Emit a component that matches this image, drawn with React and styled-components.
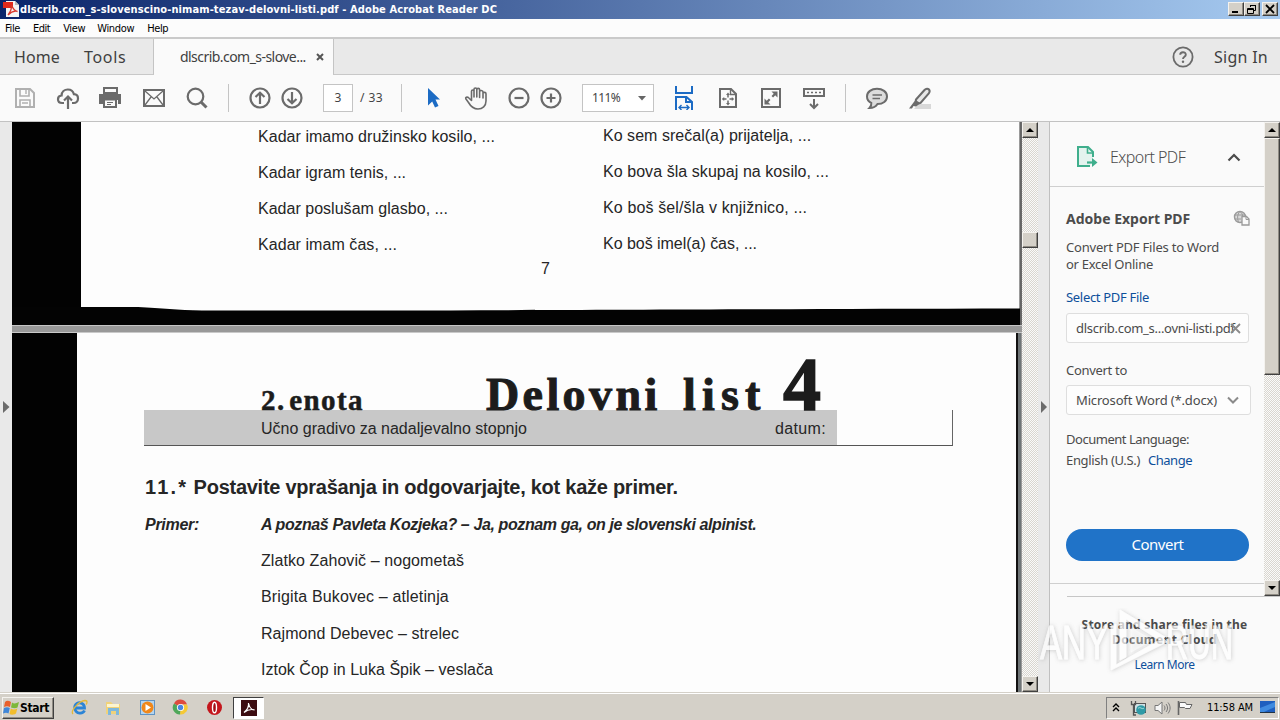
import React from 'react'
import styled, { createGlobalStyle, css } from 'styled-components';

const GlobalStyle = createGlobalStyle`
  * { box-sizing: border-box; }
  body { margin: 0; overflow: hidden; }
  svg { display: block; flex: none; }
`;

const UI = '"Noto Sans", sans-serif';
const TAHOMA = '"DejaVu Sans Condensed", "DejaVu Sans", sans-serif';
const DOC = '"Liberation Sans", sans-serif';

const kadar = [
  ['Kadar imamo družinsko kosilo, ...', 0.04],
  ['Kadar igram tenis, ...', 0.02],
  ['Kadar poslušam glasbo, ...', 0.02],
  ['Kadar imam čas, ...', 0.06],
];
const ko = [
  ['Ko sem srečal(a) prijatelja, ...', 0.03],
  ['Ko bova šla skupaj na kosilo, ...', 0.06],
  ['Ko boš šel/šla v knjižnico, ...', 0.13],
  ['Ko boš imel(a) čas, ...', -0.03],
];
const people = [
  ['Zlatko Zahovič – nogometaš', 0.08],
  ['Brigita Bukovec – atletinja', 0.14],
  ['Rajmond Debevec – strelec', 0.06],
  ['Iztok Čop in Luka Špik – veslača', 0.02],
];
const menu = [
  ['File', 5, -0.37],
  ['Edit', 13, -0.5],
  ['View', 13, -0.36],
  ['Window', 12, -0.33],
  ['Help', 13, -0.39],
];

const G = '#6b6b6b';

const SaveIcon = () => (
  <svg width="24" height="24" fill="none" stroke="#b0b0b0" strokeWidth="2">
    <path d="M3 3H17L21 7V21H3Z" />
    <path d="M7 3V10H16V3M7 21V14H17V21" strokeWidth="1.6" />
    <path d="M13 4V8M9 17H15" strokeWidth="1.4" />
  </svg>
);
const CloudIcon = () => (
  <svg width="24" height="24" fill="none" stroke={G} strokeWidth="2.200">
    <path d="M8 17H6.2C3.500 17 2 15.300 2 13.200C2 11 3.600 9.600 5.600 9.500C5.700 5.900 8.500 3.500 11.800 3.500C15 3.500 17.300 5.400 17.900 8.200C20.400 8.300 22 10.100 22 12.500C22 15.200 20.200 17 17.800 17H16" />
    <path d="M12 23V11M8 14.500L12 10.500L16 14.500" />
  </svg>
);
const PrintIcon = () => (
  <svg width="24" height="24">
    <path d="M6 2H19V7H6Z" fill="none" stroke={G} strokeWidth="2" />
    <path d="M1 8H23V18H20V14H5V18H1Z" fill={G} />
    <path d="M6 13.500H18V21H6Z" fill="#fafafa" stroke={G} strokeWidth="2" />
    <path d="M9 16.500H15M9 18.500H13" stroke={G} strokeWidth="1" />
  </svg>
);
const MailIcon = () => (
  <svg width="24" height="24" fill="none" stroke={G}>
    <rect x="2" y="4" width="20" height="16" strokeWidth="2" />
    <path d="M3 5L12 13L21 5M3 19L9 11M21 19L15 11" strokeWidth="1.3" />
  </svg>
);
const SearchIcon = () => (
  <svg width="24" height="24" fill="none" stroke={G}>
    <circle cx="10.500" cy="10.500" r="7.800" strokeWidth="2.200" />
    <path d="M16 16L21.500 21.500" strokeWidth="3" />
  </svg>
);
const RoundIcon = ({ d }) => (
  <svg width="24" height="24" fill="none" stroke={G} strokeWidth="2.200">
    <circle cx="12" cy="12" r="9.500" />
    <path d={d} />
  </svg>
);
const CursorIcon = () => (
  <svg width="24" height="24">
    <path d="M6 2L18 13.500H13.500L16.500 20L13 21.500L10.200 15.500L6 19.500Z" fill="#1c6bc4" />
  </svg>
);
const HandIcon = () => (
  <svg width="24" height="24" fill="none" stroke={G} strokeWidth="1.600" strokeLinecap="round" strokeLinejoin="round">
    <path d="M7.500 14.500V5.300C7.500 3.500 10 3.500 10 5.300V11M10 11V3.300C10 1.500 12.800 1.500 12.800 3.300V11M12.800 11V3.600C12.800 1.900 15.600 1.900 15.600 3.600V11.500M15.600 11.500V5.600C15.600 4 19 4 19 6V12M19 12V7.500C19 6 22 6 22 7.800V15C22 20 18.500 23 14 23C9 23 6.500 20 4.500 16.500L1.800 12.800C1.200 11.500 3 10.500 4.300 11.500L7.500 14.500" />
  </svg>
);
const FitWidthIcon = () => (
  <svg width="24" height="24" fill="none" stroke="#1c6bc4" strokeWidth="2">
    <path d="M4 -1V7H20V-1" />
    <path d="M4 24V11H14.500L20 16V24M14 11V16H20" />
    <path d="M7 21.500H17M9.500 19L7 21.500L9.500 24M14.500 19L17 21.500L14.500 24" strokeWidth="1.400" />
  </svg>
);
const FitPageIcon = () => (
  <svg width="24" height="24" fill="none" stroke={G} strokeWidth="2">
    <path d="M4 3H15L20 8V21H4Z" />
    <path d="M14.500 3V8.500H20" strokeWidth="1.400" />
    <path d="M12 8V18M7 13H17" strokeWidth="1.500" strokeDasharray="3.500 3" />
    <path d="M12 6.500L14 9H10ZM12 19.500L14 17H10ZM5.800 13L8.200 11V15ZM18.200 13L15.800 11V15Z" fill={G} stroke="none" />
  </svg>
);
const FullScreenIcon = () => (
  <svg width="24" height="24">
    <rect x="3" y="3" width="18" height="18" fill="none" stroke={G} strokeWidth="2" />
    <path d="M12.500 5.500H18.500V11.500ZM5.500 12.500V18.500H11.500Z" fill={G} />
    <path d="M13.300 10.700L16 8M10.700 13.300L8 16" stroke={G} strokeWidth="2.200" />
  </svg>
);
const KeysIcon = () => (
  <svg width="24" height="24" fill="none" stroke={G} strokeWidth="2">
    <rect x="2" y="3" width="20" height="7" />
    <path d="M5 6.500H20" strokeDasharray="2 2" strokeWidth="1.600" />
    <path d="M12 13V22M8 18L12 22L16 18" />
  </svg>
);
const CommentIcon = () => (
  <svg width="24" height="24">
    <path d="M12 2.700C17.500 2.700 22 6 22 10.500C22 15 18 18 12.500 18C11 20.500 8 22 4.500 22C6 20.500 6.500 18.800 6.300 17C3.600 15.700 2 13.300 2 10.500C2 6 6.500 2.700 12 2.700Z" fill="#dcdcdc" stroke={G} strokeWidth="2" />
    <path d="M7.500 9H17M7.500 12.500H15" stroke={G} strokeWidth="1.400" />
  </svg>
);
const PenIcon = () => (
  <svg width="24" height="24">
    <path d="M10 18H23V23H6Z" fill="#d8d8d8" />
    <path d="M8 13.500L16.500 4C18 2.500 20 2.500 21 3.500C22 4.700 21.800 6 20.800 7.300L12.500 17C11 18 7 15.500 8 13.500Z" fill="#e8e8e8" stroke={G} strokeWidth="2" />
    <path d="M7 14.500L11.500 18L8 20.500L5.500 20L4 22.500H1Z" fill={G} />
  </svg>
);

const Triangle = ({ dir }) => (
  <svg width="8" height="4">
    <path d={dir === 'up' ? 'M4 0L8 4H0Z' : 'M0 0H8L4 4Z'} fill="#000" />
  </svg>
);

const PdfFileIcon = () => (
  <svg width="16" height="16">
    <path d="M3 0H12L16 4V16H3Z" fill="#f4f4f4" />
    <path d="M0 1H10V7H0Z" fill="#e02a1c" />
    <path d="M12 0V4H16Z" fill="#bbb" />
    <path d="M5 14C8 10 9 8 8.500 4C10 8 12 10 14.500 10.500C11 9.500 8 11 5 14Z" fill="none" stroke="#d8382c" strokeWidth="1.300" />
  </svg>
);

const ExportIcon = () => (
  <svg width="22" height="24" fill="none" stroke="#3fae8c">
    <path d="M14 21H2V2H12L17 7V12" strokeWidth="2" fill="#e3f3ee" />
    <path d="M11.500 2V8H17" strokeWidth="1.600" />
    <path d="M11 17.500H19" strokeWidth="2.200" />
    <path d="M16 13L21.500 17.500L16 22Z" fill="#3fae8c" stroke="none" />
  </svg>
);

const GlobeIcon = () => (
  <svg width="18" height="18" fill="none" stroke="#9a9a9a">
    <circle cx="7" cy="7" r="5.500" strokeWidth="1.400" fill="#d9d9d9" />
    <path d="M1.500 5H12M1.500 9H8M7 1.500C4 4 4 10 6 12.500M7 1.500C9 3 9.500 4.500 9.500 6" strokeWidth="1" />
    <path d="M9 6.500H13.500L16 9V15H9Z" fill="#fafafa" strokeWidth="1.300" />
    <path d="M13 6.500V9.500H16" />
  </svg>
);

const Watermark = () => (
  <WatermarkSvg width="206" height="74" viewBox="0 0 206 74">
    <defs>
      <filter id="soft" x="-20%" y="-20%" width="140%" height="140%">
        <feDropShadow dx="0.500" dy="0.500" stdDeviation="2" floodColor="#777" floodOpacity="0.500" />
      </filter>
    </defs>
    <g filter="url(#soft)" fill="#fff" stroke="#fff" strokeWidth="0.800" opacity="0.720">
      <text x="5" y="51" fontFamily="Liberation Sans, sans-serif" fontSize="48" textLength="68" lengthAdjust="spacingAndGlyphs">ANY</text>
      <text x="131" y="51" fontFamily="Liberation Sans, sans-serif" fontSize="48" textLength="67" lengthAdjust="spacingAndGlyphs">RUN</text>
      <path d="M76 62V18L81 16V57L128 30L132 34Z" />
      <path d="M85 2L130 29L126 33L91 11V49L85 52Z" />
      <path d="M96 20L117 32L96 44Z" fillOpacity="0.400" strokeOpacity="0.400" />
    </g>
  </WatermarkSvg>
);

function VScroll({ before, thumb }) {
  return (
    <Track>
      <ScrollButton><Triangle dir="up" /></ScrollButton>
      <Thumb $before={before} $size={thumb} />
      <Spring />
      <ScrollButton><Triangle dir="down" /></ScrollButton>
    </Track>
  )
}

function App() {
  return (
    <Window>
      <GlobalStyle />
      <TitleBar>
        <PdfFileIcon />
        <WindowTitle>dlscrib.com_s-slovenscino-nimam-tezav-delovni-listi.pdf - Adobe Acrobat Reader DC</WindowTitle>
        <WinButton><svg width="10" height="10"><path d="M1 8H7" stroke="#000" strokeWidth="2" /></svg></WinButton>
        <WinButton><svg width="10" height="10" fill="none" stroke="#000"><path d="M3.500 3V1.500H8.500V6.500H7M3 1.500H9M.5 4.500H6.500V9.500H.5ZM0 5.500H7" /></svg></WinButton>
        <WinButton $gap={2}><svg width="10" height="10"><path d="M1 1L9 9M9 1L1 9" stroke="#000" strokeWidth="1.800" /></svg></WinButton>
      </TitleBar>
      <MenuBar>
        {menu.map(([name, gap, ls]) => <MenuItem key={name} $gap={gap} $ls={ls}>{name}</MenuItem>)}
      </MenuBar>
      <TabBar>
        <HomeTabs>
          <HomeTab $ls={0.12}>Home</HomeTab>
          <HomeTab $ls={0.7}>Tools</HomeTab>
        </HomeTabs>
        <FileTab>
          <FileName>dlscrib.com_s-slove...</FileName>
          <svg width="8" height="8"><path d="M1 1L7 7M7 1L1 7" stroke="#555" strokeWidth="2" /></svg>
        </FileTab>
        <TabRest>
          <svg width="22" height="22">
            <circle cx="11" cy="11" r="9.600" fill="none" stroke={G} strokeWidth="1.800" />
            <path d="M8.200 8.800C8.200 5.400 13.800 5.400 13.800 8.700C13.800 10.800 11 10.800 11 13" fill="none" stroke={G} strokeWidth="1.900" />
            <circle cx="11" cy="15.700" r="1.200" fill={G} />
          </svg>
          <SignIn>Sign In</SignIn>
        </TabRest>
      </TabBar>

      <Toolbar>
        <Tool $gap={13}><SaveIcon /></Tool>
        <Tool $gap={19}><CloudIcon /></Tool>
        <Tool $gap={18}><PrintIcon /></Tool>
        <Tool $gap={20}><MailIcon /></Tool>
        <Tool $gap={19}><SearchIcon /></Tool>
        <Separator $gap={19} />
        <Tool $gap={19}><RoundIcon d="M12 18V7M7.500 11L12 6.800L16.500 11" /></Tool>
        <Tool $gap={8}><RoundIcon d="M12 6V17M7.500 13L12 17.200L16.500 13" /></Tool>
        <PageBox>3</PageBox>
        <PageCount>/ 33</PageCount>
        <Separator $gap={17} />
        <Tool $gap={20}><CursorIcon /></Tool>
        <Tool $gap={18}><HandIcon /></Tool>
        <Tool $gap={19}><RoundIcon d="M7.500 12H16.500" /></Tool>
        <Tool $gap={8}><RoundIcon d="M7.500 12H16.500M12 7.500V16.500" /></Tool>
        <ZoomBox>
          <ZoomValue>111%</ZoomValue>
          <svg width="8" height="5"><path d="M0 0H8L4 4.500Z" fill="#666" /></svg>
        </ZoomBox>
        <Tool $gap={18}><FitWidthIcon /></Tool>
        <Tool $gap={20}><FitPageIcon /></Tool>
        <Tool $gap={19}><FullScreenIcon /></Tool>
        <Tool $gap={19}><KeysIcon /></Tool>
        <Separator $gap={19} />
        <Tool $gap={19}><CommentIcon /></Tool>
        <Tool $gap={19}><PenIcon /></Tool>
      </Toolbar>

      <Main>
        <Strip>
          <svg width="7" height="12"><path d="M0 0L6.500 6L0 12Z" fill="#6b6b6b" /></svg>
        </Strip>
        <Document>
          <FirstPage>
            <Ink $w={69} />
            <Paper>
              <Columns>
                <Column $w={345}>
                  {kadar.map(([t, ls]) => <DocLine key={t} $ls={ls}>{t}</DocLine>)}
                </Column>
                <Column $up>
                  {ko.map(([t, ls]) => <DocLine key={t} $ls={ls}>{t}</DocLine>)}
                </Column>
              </Columns>
              <PageNumber>7</PageNumber>
            </Paper>
            <PaperEdge $dark />
            <BottomInk width="1008" height="20" preserveAspectRatio="none">
              <path d="M0 2H126C150 3 165 5 190 5.500C400 6 600 4.500 1008 3.500V20H0Z" fill="#030303" />
            </BottomInk>
          </FirstPage>
          <PageGap />
          <SecondPage>
            <Ink $w={65} />
            <Paper>
              <Heading>
                <Unit>2. enota</Unit>
                <Sheet $w={197} $ls={3.4}>Delovni</Sheet>
                <Sheet $w={100} $ls={6.2}>list</Sheet>
                <SheetNumber>4</SheetNumber>
              </Heading>
              <Band>
                <BandFill>
                  <span>Učno gradivo za nadaljevalno stopnjo</span>
                  <Datum>datum:</Datum>
                </BandFill>
              </Band>
              <Task><TaskNumber>11.*</TaskNumber> Postavite vprašanja in odgovarjajte, kot kaže primer.</Task>
              <Example>
                <ExampleLabel>Primer:</ExampleLabel>
                <ExampleText>A poznaš Pavleta Kozjeka? – Ja, poznam ga, on je slovenski alpinist.</ExampleText>
              </Example>
              <People>
                {people.map(([t, ls]) => <DocLine key={t} $ls={ls} $h={36.3}>{t}</DocLine>)}
              </People>
            </Paper>
            <PaperEdge />
          </SecondPage>
        </Document>
        <VScroll before={94} thumb={16} />
        <Strip $right>
          <svg width="7" height="12"><path d="M0 0L6 6L0 12Z" fill="#6b6b6b" /></svg>
        </Strip>

        <Side>
          <SideTop>
            <Panel>
              <PanelHeader>
                <ExportIcon />
                <PanelTitle>Export PDF</PanelTitle>
                <svg width="14" height="9"><path d="M1.500 7.500L7 2L12.500 7.500" fill="none" stroke="#4b4b4b" strokeWidth="2.200" /></svg>
              </PanelHeader>
              <PanelBody>
                <TitleRow>
                  <PanelHeading>Adobe Export PDF</PanelHeading>
                  <GlobeIcon />
                </TitleRow>
                <Label $top={9} $ls={-0.2}>Convert PDF Files to Word</Label>
                <Label $ls={-0.27}>or Excel Online</Label>
                <Label $top={16} $ls={-0.31} $link>Select PDF File</Label>
                <FileBox>
                  <BoxText $ls={-0.29}>dlscrib.com_s...ovni-listi.pdf</BoxText>
                  <ClearMark width="11" height="11"><path d="M1 1L10 10M10 1L1 10" stroke="#8a8a8a" strokeWidth="1.800" /></ClearMark>
                </FileBox>
                <Label $top={19} $ls={-0.3}>Convert to</Label>
                <SelectBox>
                  <BoxText $ls={-0.16}>Microsoft Word (*.docx)</BoxText>
                  <svg width="12" height="8"><path d="M1 1.500L6 6.500L11 1.500" fill="none" stroke="#8a8a8a" strokeWidth="2" /></svg>
                </SelectBox>
                <Label $top={16} $ls={-0.47}>Document Language:</Label>
                <LanguageRow>
                  <Label $ls={-0.34}>English (U.S.)</Label>
                  <Label $ls={-0.48} $link>Change</Label>
                </LanguageRow>
                <ConvertButton>Convert</ConvertButton>
              </PanelBody>
              <PanelEnd />
            </Panel>
            <VScroll before={0} thumb={237} />
          </SideTop>
          <SideFooter>
            <Promo $ls={0.22}>Store and share files in the</Promo>
            <Promo $ls={0.4}>Document Cloud</Promo>
            <LearnMore>Learn More</LearnMore>
          </SideFooter>
          <Watermark />
        </Side>
      </Main>

      <Taskbar>
        <StartButton>
          <svg width="17" height="16">
            <path d="M2 2C4 0 6 1 8 2L7 7C5 6 3 6 1 7Z" fill="#e8602c" />
            <path d="M9 2.500C11 4 13 3.500 16 2L14.500 7.500C12 9 10 8 8 7.500Z" fill="#7db83a" />
            <path d="M1 8C3 7 5 7 6.800 8L5.500 13.500C4 12.500 2 12.500 0 13.500Z" fill="#3f86d8" />
            <path d="M7.800 8.500C10 10 12 9.500 14.300 8.500L13 13.500C11 15 8 15 6.500 14Z" fill="#f2bd2c" />
          </svg>
          Start
        </StartButton>
        <QuickIcon $gap={17}>
          <svg width="17" height="17">
            <path d="M13.500 11.500C12 15 5 15.500 3.800 9.500C3 5 8 2.500 11 4.500C12.800 5.500 13.500 7 13.500 9H5" fill="none" stroke="#2b84d6" strokeWidth="2.800" />
            <path d="M2 15C-1 12 8 2 14 1.500C17 1.500 16 4.500 15 5.500" fill="none" stroke="#e3b83a" strokeWidth="1.300" />
          </svg>
        </QuickIcon>
        <QuickIcon $gap={17}>
          <svg width="17" height="17">
            <path d="M1 3H6L8 5H15V15H1Z" fill="#f0d27a" />
            <path d="M2 5H14V8H2Z" fill="#fdf5cf" />
            <path d="M3 9H14V16H11V12H6V16H3Z" fill="#7fb8dc" />
          </svg>
        </QuickIcon>
        <QuickIcon $gap={17}>
          <svg width="17" height="17">
            <rect x="1.500" y="1.500" width="14" height="14" fill="#b5d5ef" stroke="#5f93c4" />
            <circle cx="8.500" cy="8.500" r="6" fill="#f0871a" />
            <path d="M6.500 5L12 8.500L6.500 12Z" fill="#fff" />
          </svg>
        </QuickIcon>
        <QuickIcon $gap={16}>
          <svg width="17" height="17">
            <path d="M8.500 8.500L2 4.500A7 7 0 0 1 15 5.500L8.500 5.500Z" fill="#dd4b3e" />
            <path d="M8.500 8.500L11 5.500H15A7 7 0 0 1 8 15.500Z" fill="#f5c935" />
            <path d="M8.500 8.500L8 15.500A7 7 0 0 1 2 4.500Z" fill="#4fa75a" />
            <circle cx="8.500" cy="8.500" r="3.600" fill="#fff" />
            <circle cx="8.500" cy="8.500" r="2.700" fill="#4a86e0" />
          </svg>
        </QuickIcon>
        <QuickIcon $gap={17}>
          <svg width="17" height="17">
            <circle cx="8.500" cy="8.500" r="7.500" fill="#c4161c" />
            <ellipse cx="8.500" cy="8.500" rx="2" ry="5.300" fill="#a30e14" stroke="#fff" strokeWidth="1.400" />
          </svg>
        </QuickIcon>
        <ActiveTask>
          <svg width="16" height="16">
            <rect width="16" height="16" fill="#3c0c10" />
            <path d="M3 12.500C6 10 8 6 7.500 3C8.500 8 10.500 10 13.500 9.800C10 9 6 10 3 12.500Z" fill="none" stroke="#fff" strokeWidth="1.200" />
          </svg>
        </ActiveTask>
        <Tray>
          <svg width="8" height="9" fill="none" stroke="#000" strokeWidth="1.400"><path d="M1 4L4 1L7 4M1 8L4 5L7 8" /></svg>
          <TrayIcon $gap={10}>
            <svg width="17" height="16">
              <rect x="4.500" y="3.500" width="11" height="9" fill="#cfe0e4" stroke="#555" />
              <path d="M1.500 1V4.500H5.500V1M3.500 5V15H6" fill="none" stroke="#555" strokeWidth="1.300" />
              <circle cx="11" cy="10" r="4.800" fill="#2f9aa6" />
              <path d="M8 8.500C10 6 12 10 14 8" stroke="#a8e0dc" fill="none" />
            </svg>
          </TrayIcon>
          <TrayIcon $gap={7}>
            <svg width="17" height="16" fill="none" stroke="#777">
              <path d="M1 5.500H4L8 2V14L4 10.500H1Z" fill="#f5f5f5" />
              <path d="M10 5.500C11.300 7 11.300 9 10 10.500M12 4C14 6.500 14 9.500 12 12M14 2.500C16.800 6 16.800 10 14 13.500" />
            </svg>
          </TrayIcon>
          <TrayIcon $gap={6}>
            <svg width="17" height="16" fill="#fafafa" stroke="#666">
              <path d="M1.500 1V15" strokeWidth="1.600" />
              <path d="M2.500 2.500H8.500L9.500 4.500H15L13 8.500H8.500L7.500 7.500H2.500Z" />
            </svg>
          </TrayIcon>
          <Clock>11:58 AM</Clock>
          <svg width="15" height="13">
            <rect width="15" height="11" fill="#1e5fbf" />
            <path d="M0 7L15 1V6L4 11H0Z" fill="#3f8be0" />
            <path d="M0 11.500H15" stroke="#234" />
          </svg>
        </Tray>
      </Taskbar>
    </Window>
  )
}

const Window = styled.div`
  width: 1280px;
  height: 720px;
  overflow: hidden;
  display: flex;
  flex-direction: column;
  background: #fafafa;
  color: #000;
`;
const raised = css`
  background: #d4d0c8;
  border: 1px solid;
  border-color: #f4f2ee #404040 #404040 #f4f2ee;
  box-shadow: inset -1px -1px 0 #908c84;
`;
const TitleBar = styled.div`
  height: 19px;
  flex: none;
  display: flex;
  align-items: center;
  padding: 0 2px 1px 3px;
  background: linear-gradient(90deg, #0a246a, #a6caf0);
`;
const WindowTitle = styled.div`
  flex: 1;
  padding-left: 1px;
  color: #fff;
  font: bold 11px ${TAHOMA};
  letter-spacing: 0.105px;
  white-space: nowrap;
`;
const WinButton = styled.div`
  ${raised}
  width: 16px;
  height: 14px;
  margin-left: ${p => p.$gap || 0}px;
  display: flex;
  align-items: center;
  justify-content: center;
`;
const MenuBar = styled.div`
  height: 18px;
  flex: none;
  display: flex;
  align-items: center;
  background: #fcfcfc;
`;
const MenuItem = styled.span`
  margin-left: ${p => p.$gap}px;
  font: 11px ${TAHOMA};
  letter-spacing: ${p => p.$ls}px;
`;
const TabBar = styled.div`
  height: 38px;
  flex: none;
  display: flex;
  border-top: 2px solid #cacaca;
`;
const HomeTabs = styled.div`
  width: 154px;
  display: flex;
  align-items: center;
  gap: 24px;
  padding-left: 14px;
  background: #e9e9e9;
  border-right: 1px solid #c4c4c4;
  border-bottom: 1px solid #c8c8c8;
`;
const HomeTab = styled.span`
  font: 16px/20px ${UI};
  letter-spacing: ${p => p.$ls}px;
  color: #3f3f3f;
`;
const FileTab = styled.div`
  width: 179px;
  display: flex;
  align-items: center;
  padding: 0 0 1px 26px;
  color: #3f3f3f;
`;
const FileName = styled.span`
  width: 136px;
  font: 14px/20px ${UI};
  letter-spacing: -0.55px;
  white-space: nowrap;
`;
const TabRest = styled.div`
  flex: 1;
  display: flex;
  align-items: center;
  justify-content: flex-end;
  gap: 20px;
  padding-right: 12px;
  background: #e9e9e9;
  border-left: 1px solid #c4c4c4;
  border-bottom: 1px solid #c8c8c8;
`;
const SignIn = styled.span`
  font: 16px/20px ${UI};
  letter-spacing: 0.27px;
  color: #3f3f3f;
`;
const Toolbar = styled.div`
  height: 47px;
  flex: none;
  display: flex;
  align-items: center;
  border-bottom: 1px solid #c2c2c2;
  font: 12px/16px ${UI};
  color: #444;
`;
const Tool = styled.div`
  width: 24px;
  height: 24px;
  margin-left: ${p => p.$gap}px;
`;
const Separator = styled.div`
  width: 1px;
  height: 28px;
  margin-left: ${p => p.$gap}px;
  background: #c4c4c4;
`;
const PageBox = styled.div`
  width: 30px;
  height: 28px;
  margin-left: 19px;
  border: 1px solid #c4c4c4;
  background: #fff;
  display: flex;
  align-items: center;
  justify-content: center;
`;
const PageCount = styled.span`
  width: 24px;
  margin-left: 7px;
  letter-spacing: 0.4px;
  white-space: nowrap;
`;
const ZoomBox = styled.div`
  width: 72px;
  height: 28px;
  margin-left: 19px;
  padding: 0 7px 0 9px;
  border: 1px solid #c4c4c4;
  background: #fff;
  display: flex;
  align-items: center;
  justify-content: space-between;
`;
const ZoomValue = styled.span`
  letter-spacing: -0.6px;
`;
const Main = styled.div`
  height: 570px;
  flex: none;
  display: flex;
`;
const Strip = styled.div`
  width: 12px;
  flex: none;
  display: flex;
  align-items: center;
  padding-left: 3px;
  background: #e9e9e9;
  border-right: ${p => p.$right ? '1px solid #c0c0c0' : 'none'};
`;
const Document = styled.div`
  width: 1010px;
  flex: none;
  overflow: hidden;
  font: 16px/36px ${DOC};
  color: #262626;
`;
const FirstPage = styled.div`
  position: relative;
  height: 203px;
  display: flex;
  overflow: hidden;
`;
const SecondPage = styled.div`
  height: 359px;
  display: flex;
`;
const Ink = styled.div`
  width: ${p => p.$w}px;
  flex: none;
  background: #020202;
`;
const Paper = styled.div`
  flex: 1;
  min-width: 0;
  background: #fdfdfd;
`;
const PaperEdge = styled.div`
  width: ${p => p.$dark ? 3 : 6}px;
  flex: none;
  background: ${p => p.$dark
    ? 'linear-gradient(90deg, #b5b5b5, #555 60%, #777)'
    : 'linear-gradient(90deg, #111 0 2px, #6f7577 2px 5px, #999 5px)'};
`;
const BottomInk = styled.svg`
  position: absolute;
  left: 0;
  bottom: 0;
`;
const Columns = styled.div`
  display: flex;
  margin-top: -3px;
  padding-left: 177px;
`;
const Column = styled.div`
  width: ${p => p.$w ? p.$w + 'px' : 'auto'};
  margin-top: ${p => p.$up ? -1 : 0}px;
`;
const DocLine = styled.div`
  height: ${p => p.$h || 36}px;
  letter-spacing: ${p => p.$ls}px;
  white-space: nowrap;
`;
const PageNumber = styled.div`
  margin-top: -12px;
  padding-left: 460px;
`;
const PageGap = styled.div`
  height: 8px;
  background: #999;
  border-top: 1px solid #c6c6c6;
  border-bottom: 1px solid #c9c9c9;
`;
const Heading = styled.div`
  height: 77px;
  display: flex;
  align-items: baseline;
  padding-left: 184px;
  font-family: "Liberation Serif", serif;
  font-weight: bold;
  color: #1c1c1c;
  line-height: 103px;
`;
const Unit = styled.div`
  width: 225px;
  font-size: 29px;
  letter-spacing: 1.4px;
  word-spacing: -5px;
  -webkit-text-stroke: 0.5px #1c1c1c;
`;
const Sheet = styled.div`
  width: ${p => p.$w}px;
  font-size: 46px;
  letter-spacing: ${p => p.$ls}px;
  -webkit-text-stroke: 1px #1c1c1c;
`;
const SheetNumber = styled.div`
  font-size: 76px;
  -webkit-text-stroke: 1.5px #1c1c1c;
`;
const Band = styled.div`
  width: 809px;
  height: 36px;
  margin-left: 67px;
  border-right: 1px solid #666;
  border-bottom: 1px solid #555;
`;
const BandFill = styled.div`
  width: 693px;
  height: 35px;
  display: flex;
  justify-content: space-between;
  padding: 0 11px 0 117px;
  background: #c8c8c8;
  line-height: 38px;
`;
const Datum = styled.span`
  letter-spacing: 0.35px;
`;
const Task = styled.div`
  margin: 23px 0 0 68px;
  font-size: 20px;
  font-weight: bold;
  letter-spacing: -0.26px;
  white-space: nowrap;
`;
const TaskNumber = styled.span`
  letter-spacing: 2.2px;
`;
const Example = styled.div`
  display: flex;
  margin: 2px 0 0 68px;
  font-weight: bold;
  font-style: italic;
  white-space: nowrap;
`;
const ExampleLabel = styled.div`
  width: 116px;
  letter-spacing: -0.29px;
`;
const ExampleText = styled.div`
  letter-spacing: -0.395px;
`;
const People = styled.div`
  padding-left: 184px;
`;
const Track = styled.div`
  width: 16px;
  flex: none;
  display: flex;
  flex-direction: column;
  background: conic-gradient(#d9d6cf 25%, #fafafa 0 50%, #d9d6cf 0 75%, #fafafa 0) 0 0 / 2px 2px;
`;
const ScrollButton = styled.div`
  ${raised}
  height: 16px;
  flex: none;
  display: flex;
  align-items: center;
  justify-content: center;
`;
const Thumb = styled.div`
  ${raised}
  height: ${p => p.$size}px;
  margin-top: ${p => p.$before}px;
  flex: none;
`;
const Spring = styled.div`
  flex: 1;
`;
const Side = styled.div`
  position: relative;
  flex: 1;
  min-width: 0;
  background: #fafafa;
  font-family: ${UI};
  color: #4b4b4b;
`;
const SideTop = styled.div`
  height: 474px;
  display: flex;
`;
const Panel = styled.div`
  flex: 1;
  min-width: 0;
  display: flex;
  flex-direction: column;
`;
const PanelHeader = styled.div`
  height: 65px;
  display: flex;
  align-items: center;
  padding: 6px 23px 0 26px;
  border-bottom: 1px solid #cfcfcf;
`;
const PanelTitle = styled.span`
  flex: 1;
  padding-left: 12px;
  font: 300 16px/20px ${UI};
  letter-spacing: -0.55px;
`;
const PanelBody = styled.div`
  height: 396px;
  display: flex;
  flex-direction: column;
  padding: 21px 13px 0 16px;
`;
const TitleRow = styled.div`
  height: 22px;
  display: flex;
  align-items: center;
  justify-content: space-between;
`;
const PanelHeading = styled.div`
  font: bold 14px/20px ${UI};
`;
const Label = styled.div`
  margin-top: ${p => p.$top || 0}px;
  font: 13px/17px ${UI};
  letter-spacing: ${p => p.$ls}px;
  color: ${p => p.$link ? '#0d4f9b' : '#4b4b4b'};
  white-space: nowrap;
`;
const box = css`
  height: 30px;
  display: flex;
  align-items: center;
  padding-left: 9px;
  border: 1px solid #dedede;
  border-radius: 3px;
  background: #fdfdfd;
`;
const FileBox = styled.div`
  ${box}
  position: relative;
  width: 183px;
  margin-top: 7px;
`;
const SelectBox = styled.div`
  ${box}
  width: 185px;
  margin-top: 6px;
  padding-right: 11px;
  justify-content: space-between;
`;
const BoxText = styled.span`
  font: 13px/17px ${UI};
  letter-spacing: ${p => p.$ls}px;
  white-space: nowrap;
`;
const ClearMark = styled.svg`
  position: absolute;
  right: 7px;
  top: 9px;
`;
const LanguageRow = styled.div`
  display: flex;
  gap: 8px;
  margin-top: 4px;
`;
const ConvertButton = styled.div`
  width: 183px;
  height: 32px;
  margin-top: 60px;
  border-radius: 16px;
  background: #2073c8;
  color: #fff;
  font: 15px/31px ${UI};
  letter-spacing: -0.5px;
  text-align: center;
`;
const PanelEnd = styled.div`
  flex: 1;
  border-top: 1px solid #cfcfcf;
`;
const SideFooter = styled.div`
  height: 96px;
  margin-left: 17px;
  padding: 20px 18px 0 0;
  border-top: 1px solid #c6c6c6;
  text-align: center;
`;
const Promo = styled.div`
  font: bold 12px/15px ${UI};
  letter-spacing: ${p => p.$ls}px;
  white-space: nowrap;
`;
const LearnMore = styled.div`
  margin-top: 9px;
  font: 12px/17px ${UI};
  letter-spacing: -0.49px;
  color: #0d4f9b;
`;
const WatermarkSvg = styled.svg`
  position: absolute;
  left: -15px;
  bottom: 10px;
`;
const Taskbar = styled.div`
  height: 28px;
  flex: none;
  display: flex;
  align-items: center;
  padding: 2px 1px 0 2px;
  background: #d4d0c8;
  border-top: 1px solid #d4d0c8;
  box-shadow: inset 0 1px 0 #fff;
`;
const StartButton = styled.div`
  ${raised}
  width: 52px;
  height: 22px;
  display: flex;
  align-items: center;
  gap: 0;
  font: bold 12px ${TAHOMA};
  letter-spacing: -0.35px;
`;
const QuickIcon = styled.div`
  width: 17px;
  margin-left: ${p => p.$gap}px;
`;
const ActiveTask = styled.div`
  width: 31px;
  height: 22px;
  margin-left: 10px;
  display: flex;
  align-items: center;
  justify-content: center;
  background: #fff;
  border: 1px solid;
  border-color: #404040 #fff #fff #404040;
`;
const Tray = styled.div`
  width: 173px;
  height: 22px;
  margin-left: auto;
  display: flex;
  align-items: center;
  padding: 0 3px 0 5px;
  border: 1px solid;
  border-color: #808080 #fff #fff #808080;
`;
const TrayIcon = styled.div`
  width: 17px;
  margin-left: ${p => p.$gap}px;
`;
const Clock = styled.span`
  flex: 1;
  margin-left: 13px;
  font: 11px ${TAHOMA};
  letter-spacing: -0.12px;
  white-space: nowrap;
`;

export default App
